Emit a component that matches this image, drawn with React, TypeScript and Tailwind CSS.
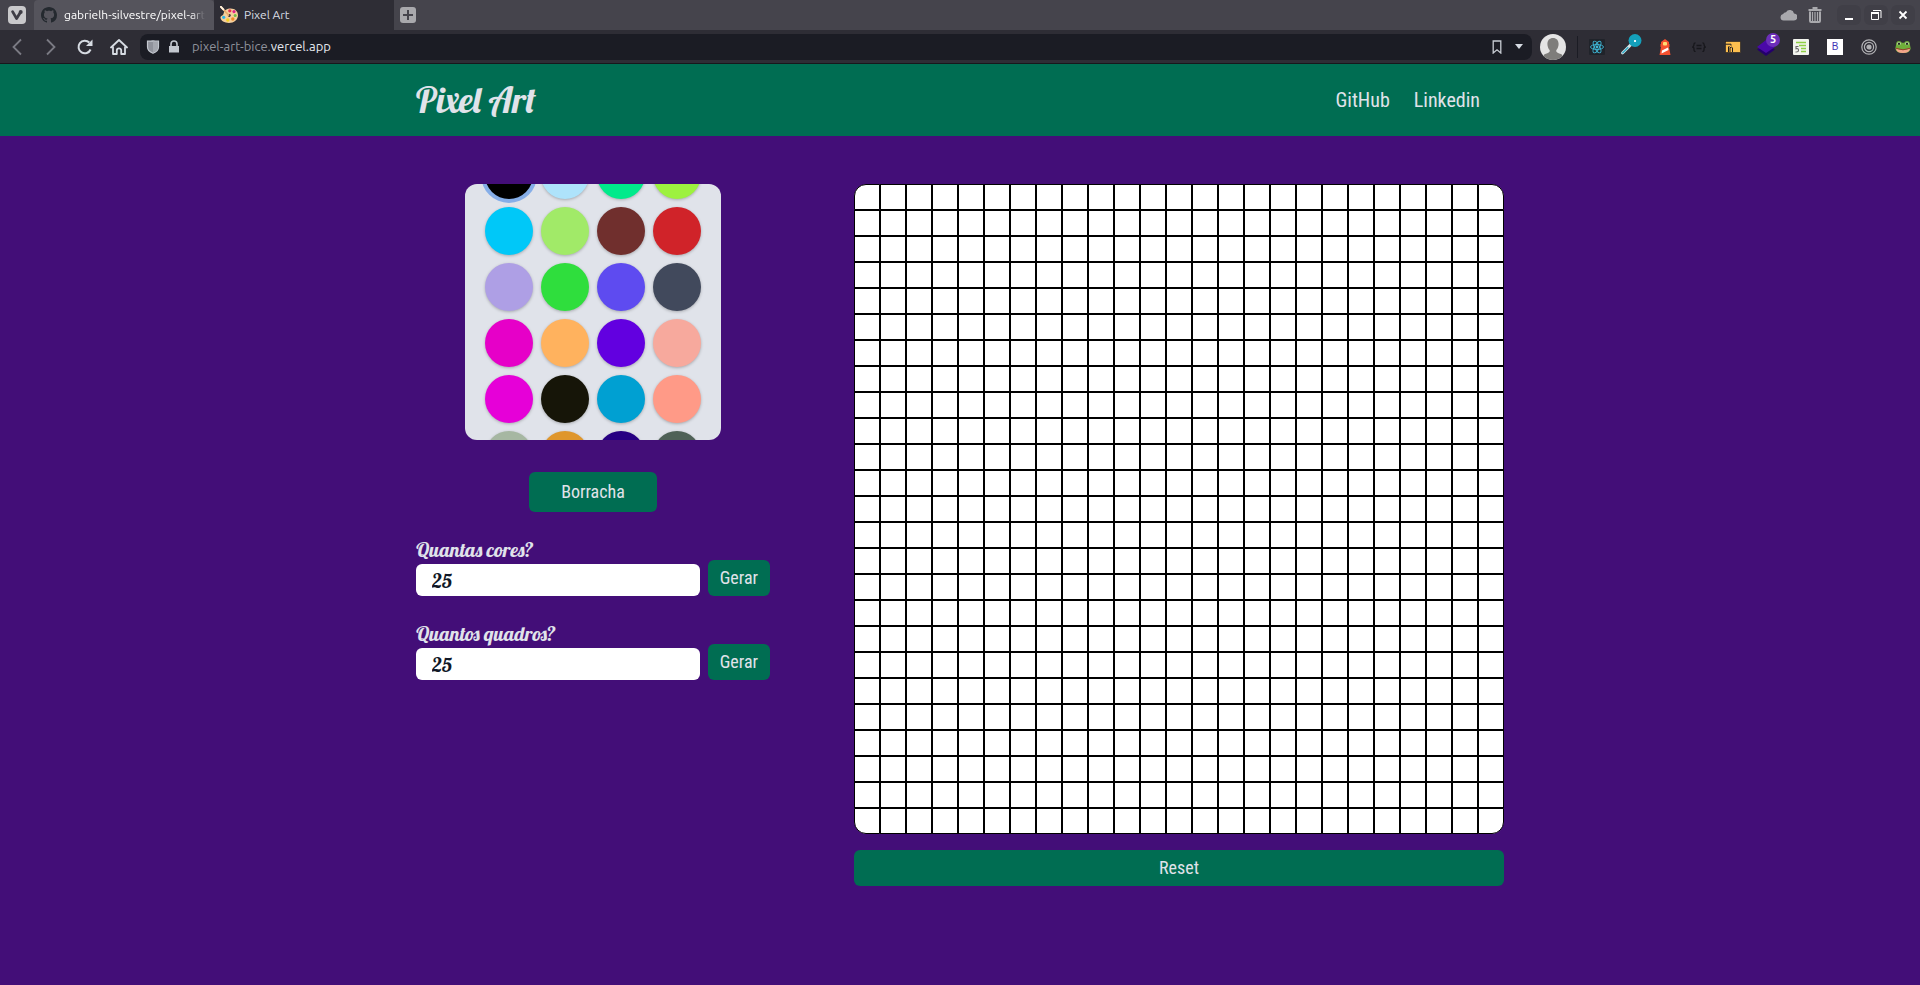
import { useLayoutEffect, useRef, useState } from 'react';
import type { ReactNode } from 'react';

const COLORS = [
  '#000000', '#aee3fb', '#00ea8b', '#9df13f',
  '#00c8f8', '#a1ea68', '#702f2d', '#d02329',
  '#ae9fe5', '#2fde3d', '#5e4bf0', '#41495c',
  '#e600c8', '#ffb25e', '#6200e0', '#f7a99d',
  '#e600d8', '#161508', '#00a0d2', '#ff9a87',
  '#a6b7a2', '#df962c', '#270082', '#4f6157',
  '#3c8dd9',
];

const BOARD_SIZE = 25;
const CELLS = Array.from({ length: BOARD_SIZE * BOARD_SIZE }, (_, i) => i);

const CORNERS: Record<number, string> = {
  0: 'rounded-tl-xl',
  [BOARD_SIZE - 1]: 'rounded-tr-xl',
  [BOARD_SIZE * (BOARD_SIZE - 1)]: 'rounded-bl-xl',
  [BOARD_SIZE * BOARD_SIZE - 1]: 'rounded-br-xl',
};

/* ---------- browser icons ---------- */

const VivaldiIcon = () => (
  <svg width="18" height="18" viewBox="0 0 18 18" aria-hidden="true">
    <rect width="18" height="18" rx="4" fill="#c9c9cb" />
    <path d="M4.6 5.6 8.6 12.6 12 7" fill="none" stroke="#3e3d45" strokeWidth="2.8" strokeLinecap="round" strokeLinejoin="round" />
    <circle cx="12.7" cy="5.9" r="2" fill="#3e3d45" />
  </svg>
);

const GithubIcon = () => (
  <svg width="16" height="16" viewBox="0 0 16 16" fill="#24292f" aria-hidden="true">
    <path d="M8 0C3.58 0 0 3.58 0 8c0 3.54 2.29 6.53 5.47 7.59.4.07.55-.17.55-.38 0-.19-.01-.82-.01-1.49-2.01.37-2.53-.49-2.69-.94-.09-.23-.48-.94-.82-1.13-.28-.15-.68-.52-.01-.53.63-.01 1.08.58 1.23.82.72 1.21 1.87.87 2.33.66.07-.52.28-.87.51-1.07-1.78-.2-3.64-.89-3.64-3.95 0-.87.31-1.59.82-2.15-.08-.2-.36-1.02.08-2.12 0 0 .67-.21 2.2.82.64-.18 1.32-.27 2-.27s1.36.09 2 .27c1.53-1.04 2.2-.82 2.2-.82.44 1.1.16 1.92.08 2.12.51.56.82 1.27.82 2.15 0 3.07-1.87 3.75-3.65 3.95.29.25.54.73.54 1.48 0 1.07-.01 1.93-.01 2.2 0 .21.15.46.55.38A8.01 8.01 0 0 0 16 8c0-4.42-3.58-8-8-8z" />
  </svg>
);

const PaletteIcon = () => (
  <svg width="18" height="18" viewBox="0 0 18 18" aria-hidden="true">
    <path d="M9.5 2.5C14.5 2 18 5 18 9.3c0 4.5-4 7.7-9 7.7-4.5 0-8.3-2.2-8.5-5.2C.3 9.5 3 9.8 3.5 8 4.2 5 5.5 3 9.5 2.5Z" fill="#f6cf9c" />
    <circle cx="9.8" cy="4.8" r="1.6" fill="#e8324e" />
    <circle cx="14" cy="5.6" r="1.6" fill="#e0218a" />
    <circle cx="15.2" cy="9.5" r="1.5" fill="#6fbf44" />
    <circle cx="12.8" cy="13" r="1.7" fill="#f08a24" />
    <circle cx="3.7" cy="11.3" r="1.6" fill="#2cb5e8" />
    <circle cx="7.8" cy="14" r="1.7" fill="#f6d21f" />
    <circle cx="9.3" cy="9.5" r="1.4" fill="#2e2d35" />
    <path d="m1 1 7.5 8" stroke="#e8ad6c" strokeWidth="1.8" strokeLinecap="round" />
    <path d="m1 .8 2.3 2.6" stroke="#fff1dd" strokeWidth="2" strokeLinecap="round" />
  </svg>
);

const PlusIcon = () => (
  <svg width="16" height="16" viewBox="0 0 16 16" aria-hidden="true">
    <rect width="16" height="16" rx="3" fill="#a9a9ad" />
    <path d="M8 3v10M3 8h10" stroke="#45444c" strokeWidth="2" />
  </svg>
);

const CloudIcon = () => (
  <svg width="17" height="12" viewBox="0 0 17 12" fill="#a9a9ad" aria-hidden="true">
    <path d="M3.5 11.5a3.3 3.3 0 0 1-.4-6.5A3.2 3.2 0 0 1 6 3.2 4.3 4.3 0 0 1 14 4.5a3.5 3.5 0 0 1-.3 7Z" />
  </svg>
);

const TrashIcon = () => (
  <svg width="14" height="16" viewBox="0 0 14 16" fill="none" stroke="#a9a9ad" aria-hidden="true">
    <path d="M4.5 1h5" strokeWidth="2" />
    <path d="M.5 3h13" strokeWidth="2" />
    <path d="M2 4.5V14q0 1 1 1h8q1 0 1-1V4.5" strokeWidth="2" />
    <path d="M4.5 5v9M7 5v9M9.5 5v9" strokeWidth="1.2" />
  </svg>
);

const MinimizeIcon = () => (
  <svg width="12" height="12" viewBox="0 0 12 12" aria-hidden="true">
    <path d="M2 10h8" stroke="#fff" strokeWidth="2" />
  </svg>
);

const RestoreIcon = () => (
  <svg width="12" height="12" viewBox="0 0 12 12" fill="none" stroke="#fff" aria-hidden="true">
    <path d="M3 1.5h8V9" />
    <path d="M1.5 4v6.5h7V4" />
    <path d="M1 4h8" strokeWidth="2" />
  </svg>
);

const CloseIcon = () => (
  <svg width="12" height="12" viewBox="0 0 12 12" aria-hidden="true">
    <path d="m2.5 2.5 7 7m0-7-7 7" stroke="#fff" strokeWidth="1.8" />
  </svg>
);

const ChevronIcon = ({ right = false }: { right?: boolean }) => (
  <svg width="16" height="18" viewBox="0 0 16 18" fill="none" stroke="#7b7b84" strokeWidth="1.8" aria-hidden="true">
    {right ? <path d="m4 1.5 7.5 7.5L4 16.500" /> : <path d="M12 1.5 4.5 9l7.5 7.5" />}
  </svg>
);

const ReloadIcon = () => (
  <svg width="16" height="16" viewBox="0 0 16 16" fill="none" aria-hidden="true">
    <path d="M13.6 10.5A6.3 6.3 0 1 1 12.3 3.5" stroke="#d7dce3" strokeWidth="2" />
    <path d="M15.5.5v6.5H9Z" fill="#d7dce3" />
  </svg>
);

const HomeIcon = () => (
  <svg width="18" height="16" viewBox="0 0 18 16" fill="none" stroke="#d7dce3" strokeWidth="1.8" aria-hidden="true">
    <path d="M1 8.5 9 1l8 7.5" strokeLinecap="round" strokeLinejoin="round" />
    <path d="M3 7.5V15h3.8v-3.5a2.2 2.2 0 0 1 4.4 0V15H15V7.5" strokeLinejoin="round" />
  </svg>
);

const ShieldIcon = () => (
  <svg width="14" height="14" viewBox="0 0 14 14" aria-hidden="true">
    <path d="M1.5 1.2Q5 1.2 7 .8q2 .4 5.5.4V7q0 4-5.5 6.3Q1.5 11 1.5 7Z" fill="#8f929b" stroke="#c3c7cf" strokeWidth="1.2" />
    <path d="M7 1.5V12.5Q12 10.5 12 7V1.7Q9 1.8 7 1.5Z" fill="#a4a7af" />
  </svg>
);

const LockIcon = () => (
  <svg width="12" height="13" viewBox="0 0 12 13" aria-hidden="true">
    <rect x="1" y="6" width="10" height="6.5" fill="#c3c7cf" />
    <path d="M3 6.5V4a3 3 0 0 1 6 0v2.5" fill="none" stroke="#c3c7cf" strokeWidth="1.6" />
  </svg>
);

const BookmarkIcon = () => (
  <svg width="10" height="14" viewBox="0 0 10 14" fill="none" stroke="#c8ccd3" strokeWidth="1.3" aria-hidden="true">
    <path d="M1.2 1h7.6v12L5 9.8 1.2 13Z" />
  </svg>
);

const CaretIcon = () => (
  <svg width="8" height="5" viewBox="0 0 8 5" fill="#d7dce3" aria-hidden="true">
    <path d="M0 0h8L4 5Z" />
  </svg>
);

const AvatarIcon = () => (
  <svg width="26" height="26" viewBox="0 0 26 26" aria-hidden="true">
    <defs>
      <clipPath id="avatar-clip"><circle cx="13" cy="13" r="13" /></clipPath>
    </defs>
    <g clipPath="url(#avatar-clip)">
      <rect width="26" height="26" fill="#e4e4e4" />
      <path d="M13 4c3.4 0 5.6 2.3 5.6 6 0 2.6-1 4.8-2.2 6-.6 1.8.4 2.8 5.2 4.3L24 26H2l2.4-5.7c4.8-1.5 5.8-2.5 5.2-4.3-1.2-1.2-2.2-3.4-2.2-6 0-3.7 2.2-6 5.6-6Z" fill="#7e7d7b" />
    </g>
  </svg>
);

const ReactIcon = () => (
  <svg width="16" height="16" viewBox="0 0 16 16" aria-hidden="true">
    <rect width="16" height="16" rx="1" fill="#20232a" />
    <g fill="none" stroke="#3fb6d6" strokeWidth=".9">
      <ellipse cx="8" cy="8" rx="6.5" ry="2.5" />
      <ellipse cx="8" cy="8" rx="6.5" ry="2.5" transform="rotate(60 8 8)" />
      <ellipse cx="8" cy="8" rx="6.5" ry="2.5" transform="rotate(120 8 8)" />
    </g>
    <circle cx="8" cy="8" r="1.4" fill="#3fb6d6" />
  </svg>
);

const PickerIcon = () => (
  <svg width="28" height="26" viewBox="0 0 28 26" aria-hidden="true">
    <path d="m5.500 19 8-8" stroke="#d9e6ea" strokeWidth="2.8" strokeLinecap="round" />
    <path d="m5.800 18.700 5-5" stroke="#37aeca" strokeWidth="1.6" strokeLinecap="round" />
    <circle cx="18" cy="6.500" r="6.500" fill="#14a0bb" />
    <rect x="17" y="6" width="2" height="2" fill="#e3f6fa" />
  </svg>
);

const LighthouseIcon = () => (
  <svg width="14" height="16" viewBox="0 0 14 16" aria-hidden="true">
    <path d="M3 5V3l4-3 4 3v2h.5v3H11l1.5 8h-11L3 8h-.5V5Z" fill="#f4502f" />
    <rect x="5" y="3" width="4" height="3.5" rx="1" fill="#ffdc72" />
    <path d="m4 11.5 6-3 .5 2.500-7 3.500Z" fill="#fff" />
  </svg>
);

const BracesIcon = () => (
  <svg width="14" height="10" viewBox="0 0 14 10" fill="none" stroke="#17171c" strokeWidth="1.3" aria-hidden="true">
    <path d="M3.5.8Q2 .8 2 2.300T.8 5Q2 5 2 7.500t1.500 1.700M10.500.8q1.500 0 1.500 1.500T13.200 5Q12 5 12 7.500t-1.500 1.700M4.500 3.500h5M4.500 6.500h5" />
  </svg>
);

const FolderIcon = () => (
  <svg width="16" height="12" viewBox="0 0 16 12" aria-hidden="true">
    <rect x=".5" y=".5" width="15" height="11" fill="#fdbf4f" stroke="#1c1b20" strokeWidth=".6" />
    <path d="M.5 3.200h5.500v1.500M3.500 11V5.800h1.200M5 11V6.800q1.500-1.300 2.500 0V11" fill="none" stroke="#1c1b20" strokeWidth="1" />
  </svg>
);

const LayersIcon = () => (
  <svg width="26" height="26" viewBox="0 0 26 26" aria-hidden="true">
    <path d="m3 15.5 9 6.5 9-6.500-9-5Z" fill="#24006b" />
    <path d="m3 13 9 6 9-6-9-7Z" fill="#4a09a8" />
  </svg>
);

const NotesIcon = () => (
  <svg width="16" height="16" viewBox="0 0 16 16" aria-hidden="true">
    <rect width="16" height="16" rx="1" fill="#f2f4ee" />
    <path d="M3 3.500h10M6 6.500h7M8 9.500h5M8 12.500h5" stroke="#8fcf45" strokeWidth="1.400" />
    <path d="M5.500 7.500H3v2.300q2.500-.6 2.500 1.400T2.500 13" fill="none" stroke="#6b6b6b" strokeWidth="1.100" />
  </svg>
);

const TargetIcon = () => (
  <svg width="16" height="16" viewBox="0 0 16 16" fill="none" stroke="#b3b3b6" strokeWidth="1.2" aria-hidden="true">
    <circle cx="8" cy="8" r="7.2" />
    <circle cx="8" cy="8" r="4.6" />
    <circle cx="8" cy="8" r="2" fill="#b3b3b6" />
  </svg>
);

const FrogIcon = () => (
  <svg width="16" height="16" viewBox="0 0 16 16" aria-hidden="true">
    <path d="M1 6q0-4 3-4 2 0 2.800 1.800h2.400Q10 2 12 2q3 0 3 4l.7 3.500Q15 14 8 14T.3 9.500Z" fill="#6fae3a" />
    <circle cx="4" cy="4.600" r="1.700" fill="#e9f3d8" />
    <circle cx="12" cy="4.600" r="1.700" fill="#e9f3d8" />
    <circle cx="4" cy="4.700" r="1.200" fill="#20301a" />
    <circle cx="12" cy="4.700" r="1.200" fill="#20301a" />
    <path d="M1 9.500q7 3 14 0-.5 4.500-7 4.500T1 9.500Z" fill="#f4a58a" />
    <path d="M1 9.300q7 3 14 0" fill="none" stroke="#9c2f2a" strokeWidth=".9" />
  </svg>
);

/* ---------- browser window ---------- */

const IconButton = ({ label, className, children }: { label: string; className: string; children: ReactNode }) => (
  <button type="button" aria-label={label} className={`flex shrink-0 items-center justify-center ${className}`}>
    {children}
  </button>
);

function TabBar() {
  return (
    <div className="flex h-[30px] items-center bg-[#45444c] text-xs text-white">
      <IconButton label="Vivaldi" className="h-full w-[34px]"><VivaldiIcon /></IconButton>
      <button type="button" className="flex h-full w-[180px] shrink-0 items-center gap-[7px] overflow-hidden rounded-t-sm bg-[#55545c] pl-[7px]">
        <span className="shrink-0"><GithubIcon /></span>
        <span className="overflow-hidden mask-r-from-90% whitespace-nowrap">gabrielh-silvestre/pixel-art</span>
      </button>
      <button type="button" className="flex h-full w-[180px] shrink-0 items-center gap-[6px] bg-[#2e2d35] pl-[6px] text-[#d9dde3]">
        <PaletteIcon />
        <span>Pixel Art</span>
      </button>
      <IconButton label="Nova aba" className="h-full w-7"><PlusIcon /></IconButton>
      <div className="ml-auto flex items-center gap-[3px] pr-[5px]">
        <IconButton label="Nuvem" className="h-6 w-6"><CloudIcon /></IconButton>
        <IconButton label="Lixeira" className="mr-[7px] h-6 w-6"><TrashIcon /></IconButton>
        <IconButton label="Minimizar" className="h-5 w-6 rounded-md bg-[#403f47]"><MinimizeIcon /></IconButton>
        <IconButton label="Restaurar" className="h-5 w-6 rounded-md bg-[#403f47]"><RestoreIcon /></IconButton>
        <IconButton label="Fechar" className="h-5 w-6 rounded-md bg-[#403f47]"><CloseIcon /></IconButton>
      </div>
    </div>
  );
}

function AddressBar() {
  return (
    <div className="flex h-[34px] items-center border-b border-[#17171c] bg-[#2e2d35]">
      <IconButton label="Voltar" className="h-full w-[34px]"><ChevronIcon /></IconButton>
      <IconButton label="Avançar" className="h-full w-[34px]"><ChevronIcon right /></IconButton>
      <IconButton label="Recarregar" className="h-full w-[34px]"><ReloadIcon /></IconButton>
      <IconButton label="Início" className="h-full w-[34px]"><HomeIcon /></IconButton>
      <div className="ml-1 flex h-[26px] flex-1 items-center rounded-lg bg-[#1b1c24] pr-[3px] pl-[6px]">
        <ShieldIcon />
        <span className="mr-3 ml-2"><LockIcon /></span>
        <a href="https://pixel-art-bice.vercel.app" className="flex-1 text-[13px] text-[#8f929b]">
          pixel-art-bice.<span className="text-[#e6e9ee]">vercel.app</span>
        </a>
        <IconButton label="Favoritar" className="h-full w-6"><BookmarkIcon /></IconButton>
        <IconButton label="Histórico" className="h-full w-5"><CaretIcon /></IconButton>
      </div>
      <IconButton label="Perfil" className="ml-2 h-full w-[26px]"><AvatarIcon /></IconButton>
      <span className="ml-[11px] h-[22px] w-px bg-[#1b1c24]" />
      <div className="ml-[2px] flex">
        <IconButton label="React Developer Tools" className="h-8 w-[34px]"><ReactIcon /></IconButton>
        <IconButton label="Seletor de cor" className="h-8 w-[34px]"><PickerIcon /></IconButton>
        <IconButton label="Lighthouse" className="h-8 w-[34px]"><LighthouseIcon /></IconButton>
        <IconButton label="JSON" className="h-8 w-[34px]"><BracesIcon /></IconButton>
        <IconButton label="Pastas" className="h-8 w-[34px]"><FolderIcon /></IconButton>
        <IconButton label="Camadas" className="relative h-8 w-[34px]">
          <LayersIcon />
          <span className="absolute top-[2px] right-[4px] flex h-[14px] w-[14px] items-center justify-center rounded-full bg-[#6c2eb9] text-[11px] leading-none font-bold text-white">5</span>
        </IconButton>
        <IconButton label="Notas" className="h-8 w-[34px]"><NotesIcon /></IconButton>
        <IconButton label="Bootstrap" className="h-8 w-[34px]">
          <span className="flex h-4 w-4 items-center justify-center bg-white font-['Liberation_Sans'] text-[10px] leading-none text-[#3f35b5]">B</span>
        </IconButton>
        <IconButton label="Alvo" className="h-8 w-[34px]"><TargetIcon /></IconButton>
        <IconButton label="Sapo" className="h-8 w-[34px]"><FrogIcon /></IconButton>
      </div>
    </div>
  );
}

/* ---------- page ---------- */

function Palette({ selected, onSelect }: { selected: number; onSelect: (index: number) => void }) {
  const ref = useRef<HTMLDivElement>(null);

  useLayoutEffect(() => {
    if (ref.current) ref.current.scrollTop = 53;
  }, []);

  return (
    <div ref={ref} className="h-64 w-64 overflow-y-auto rounded-xl bg-[#e0e3ea] p-5 [scrollbar-width:none]">
      <div className="grid grid-cols-4 gap-2">
        {COLORS.map((color, index) => (
          <button
            key={index}
            type="button"
            aria-label={`Cor ${color}`}
            onClick={() => onSelect(index)}
            className={`h-12 w-12 rounded-full ${index === selected ? 'ring-4 ring-[#86aee8]' : 'shadow-[0_1px_3px_rgba(0,0,0,0.25)]'}`}
            style={{ backgroundColor: color }}
          />
        ))}
      </div>
    </div>
  );
}

function AmountForm({ id, label }: { id: string; label: string }) {
  return (
    <form className="flex w-full items-end gap-2" onSubmit={(event) => event.preventDefault()}>
      <div className="flex flex-1 flex-col font-['Lobster',cursive] text-xl">
        <label htmlFor={id} className="text-[#e0e3ea]">{label}</label>
        <input id={id} type="text" inputMode="numeric" defaultValue="25" className="h-8 w-full rounded-md bg-white px-4 text-[#111827] outline-none" />
      </div>
      <button type="submit" className="h-9 rounded-md bg-[#006d52] px-3 text-lg text-[#e0e3ea]">Gerar</button>
    </form>
  );
}

export default function App() {
  const [selected, setSelected] = useState(0);
  const [cells, setCells] = useState<Record<number, string>>({});
  const [erasing, setErasing] = useState(false);

  return (
    <div className="flex min-h-screen flex-col bg-[#430e78]">
      <div className="font-['Ubuntu','Noto_Sans',sans-serif]">
        <TabBar />
        <AddressBar />
      </div>

      <div className="flex-1 font-['Roboto_Condensed','Roboto',sans-serif] text-[#e0e3ea]">
        <header className="bg-[#006d52]">
          <div className="mx-auto flex h-[72px] max-w-[1088px] items-center justify-between">
            <h1 className="font-['Lobster',cursive] text-4xl">Pixel Art</h1>
            <nav className="flex gap-6 pr-6 text-xl">
              <a href="https://github.com">GitHub</a>
              <a href="https://linkedin.com">Linkedin</a>
            </nav>
          </div>
        </header>

        <main className="mx-auto flex max-w-[1088px] items-start justify-between pt-12">
          <section className="flex w-[354px] flex-col items-center">
            <Palette
              selected={selected}
              onSelect={(index) => {
                setSelected(index);
                setErasing(false);
              }}
            />
            <button type="button" onClick={() => setErasing(true)} className="mt-8 h-10 w-32 rounded-md bg-[#006d52] text-lg">
              Borracha
            </button>
            <div className="mt-6 flex w-full flex-col gap-6">
              <AmountForm id="colors" label="Quantas cores?" />
              <AmountForm id="squares" label="Quantos quadros?" />
            </div>
          </section>

          <section className="flex flex-col gap-4">
            <div className="grid grid-cols-[repeat(25,26px)]">
              {CELLS.map((cell) => (
                <div
                  key={cell}
                  onClick={() => setCells({ ...cells, [cell]: erasing ? '#ffffff' : COLORS[selected] })}
                  className={`h-[26px] border border-black bg-white ${CORNERS[cell] ?? ''}`}
                  style={{ backgroundColor: cells[cell] }}
                />
              ))}
            </div>
            <button type="button" onClick={() => setCells({})} className="h-9 rounded-md bg-[#006d52] text-lg">
              Reset
            </button>
          </section>
        </main>
      </div>
    </div>
  );
}
